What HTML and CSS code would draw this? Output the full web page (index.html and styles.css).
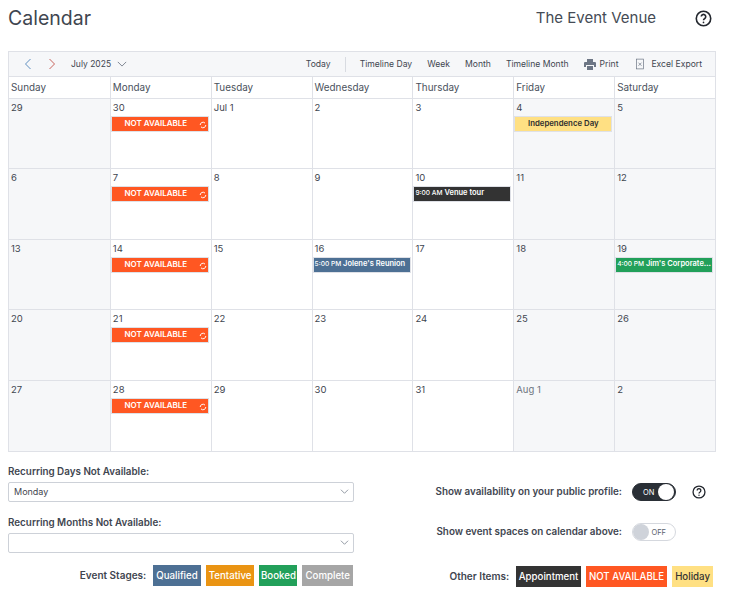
FILE: index.html
```html
<!DOCTYPE html>
<html lang="en">
<head>
<meta charset="utf-8">
<title>Calendar</title>
<link rel="stylesheet" href="styles.css">
</head>
<body>
<header class="top">
  <h1 class="title">Calendar</h1>
  <div class="venue">The Event Venue</div>
  <svg class="help help-top" viewBox="0 0 16 16"><circle cx="8" cy="8" r="6.8"/><path d="M5.900 6.200a2.100 2.100 0 1 1 3.300 1.800c-.8.500-1.200.900-1.200 1.700"/><circle class="dot" cx="8" cy="11.700" r=".8"/></svg>
</header>

<section class="cal">
  <div class="toolbar">
    <div class="nav">
      <svg class="chev" viewBox="0 0 8 12"><path class="blue" d="M6.500 1 1.500 6l5 5"/></svg>
      <svg class="chev" viewBox="0 0 8 12"><path class="red" d="M1.500 1l5 5-5 5"/></svg>
      <span class="month">July 2025</span>
      <svg class="down" viewBox="0 0 12 7"><path d="M1 1l5 5 5-5"/></svg>
    </div>
    <div class="views">
      <span>Today</span>
      <span class="sep"></span>
      <span>Timeline Day</span>
      <span class="v2">Week</span>
      <span class="v2">Month</span>
      <span class="v2">Timeline Month</span>
      <svg class="ico-print" viewBox="0 0 12 11"><path d="M3 0h6v3H3zM1.200 3h9.600c.7 0 1.200.5 1.200 1.200V8h-2V6H2v2H0V4.200C0 3.500.5 3 1.200 3zM3 7h6v4H3z"/></svg>
      <span>Print</span>
      <svg class="ico-xl" viewBox="0 0 9 12"><rect x=".5" y=".5" width="8" height="11"/><path d="M2.800 4.500l3.400 3.500M6.200 4.500 2.800 8"/></svg>
      <span>Excel Export</span>
    </div>
  </div>
  <div class="grid heads">
    <div>Sunday</div><div>Monday</div><div>Tuesday</div><div>Wednesday</div><div>Thursday</div><div>Friday</div><div>Saturday</div>
  </div>
  <div class="grid week">
    <div class="day off"><span>29</span></div>
    <div class="day"><span>30</span><div class="ev na">NOT AVAILABLE<svg class="rec" viewBox="0 0 10 10"><path d="M1.500 5a3.500 3.500 0 0 1 6-2.400M8.500 5a3.500 3.500 0 0 1-6 2.400"/></svg></div></div>
    <div class="day"><span>Jul 1</span></div>
    <div class="day"><span>2</span></div>
    <div class="day"><span>3</span></div>
    <div class="day off"><span>4</span><div class="ev hol">Independence Day</div></div>
    <div class="day off"><span>5</span></div>
  </div>
  <div class="grid week">
    <div class="day off"><span>6</span></div>
    <div class="day"><span>7</span><div class="ev na">NOT AVAILABLE<svg class="rec" viewBox="0 0 10 10"><path d="M1.500 5a3.500 3.500 0 0 1 6-2.400M8.500 5a3.500 3.500 0 0 1-6 2.400"/></svg></div></div>
    <div class="day"><span>8</span></div>
    <div class="day"><span>9</span></div>
    <div class="day"><span>10</span><div class="ev appt"><small>9:00 AM</small> Venue tour</div></div>
    <div class="day off"><span>11</span></div>
    <div class="day off"><span>12</span></div>
  </div>
  <div class="grid week">
    <div class="day off"><span>13</span></div>
    <div class="day"><span>14</span><div class="ev na">NOT AVAILABLE<svg class="rec" viewBox="0 0 10 10"><path d="M1.500 5a3.500 3.500 0 0 1 6-2.400M8.500 5a3.500 3.500 0 0 1-6 2.400"/></svg></div></div>
    <div class="day"><span>15</span></div>
    <div class="day"><span>16</span><div class="ev qual"><small>5:00 PM</small> Jolene's Reunion</div></div>
    <div class="day"><span>17</span></div>
    <div class="day off"><span>18</span></div>
    <div class="day off"><span>19</span><div class="ev booked"><small>4:00 PM</small> Jim's Corporate…</div></div>
  </div>
  <div class="grid week">
    <div class="day off"><span>20</span></div>
    <div class="day"><span>21</span><div class="ev na">NOT AVAILABLE<svg class="rec" viewBox="0 0 10 10"><path d="M1.500 5a3.500 3.500 0 0 1 6-2.400M8.500 5a3.500 3.500 0 0 1-6 2.400"/></svg></div></div>
    <div class="day"><span>22</span></div>
    <div class="day"><span>23</span></div>
    <div class="day"><span>24</span></div>
    <div class="day off"><span>25</span></div>
    <div class="day off"><span>26</span></div>
  </div>
  <div class="grid week">
    <div class="day off"><span>27</span></div>
    <div class="day"><span>28</span><div class="ev na">NOT AVAILABLE<svg class="rec" viewBox="0 0 10 10"><path d="M1.500 5a3.500 3.500 0 0 1 6-2.400M8.500 5a3.500 3.500 0 0 1-6 2.400"/></svg></div></div>
    <div class="day"><span>29</span></div>
    <div class="day"><span>30</span></div>
    <div class="day"><span>31</span></div>
    <div class="day off next"><span>Aug 1</span></div>
    <div class="day off"><span>2</span></div>
  </div>
</section>

<section class="bottom">
  <div class="left">
    <label class="lbl">Recurring Days Not Available:</label>
    <div class="select">Monday<svg class="sel-chev" viewBox="0 0 12 7"><path d="M1 1l5 5 5-5"/></svg></div>
    <label class="lbl lbl2">Recurring Months Not Available:</label>
    <div class="select"><svg class="sel-chev" viewBox="0 0 12 7"><path d="M1 1l5 5 5-5"/></svg></div>
    <div class="legend legend-l">
      <span class="legend-t">Event Stages:</span>
      <span class="tag t-q">Qualified</span>
      <span class="tag t-t">Tentative</span>
      <span class="tag t-b">Booked</span>
      <span class="tag t-c">Complete</span>
    </div>
  </div>
  <div class="right">
    <div class="opt">
      <span class="lbl">Show availability on your public profile:</span>
      <div class="switch on"><span>ON</span><i></i></div>
      <svg class="help help-opt" viewBox="0 0 16 16"><circle cx="8" cy="8" r="6.800"/><path d="M5.900 6.200a2.100 2.100 0 1 1 3.300 1.800c-.8.500-1.200.900-1.200 1.700"/><circle class="dot" cx="8" cy="11.700" r=".8"/></svg>
    </div>
    <div class="opt opt2">
      <span class="lbl">Show event spaces on calendar above:</span>
      <div class="switch"><i></i><span>OFF</span></div>
      <span class="help-gap"></span>
    </div>
    <div class="legend legend-r">
      <span class="legend-t">Other Items:</span>
      <span class="tag t-a">Appointment</span>
      <span class="tag t-n">NOT AVAILABLE</span>
      <span class="tag t-h">Holiday</span>
    </div>
  </div>
</section>
</body>
</html>
```
FILE: styles.css
```css
* { box-sizing: border-box; }
html, body { margin: 0; padding: 0; }
body {
  width: 733px;
  height: 597px;
  overflow: hidden;
  background: #fff;
  font-family: "Inter", "Liberation Sans", sans-serif;
  color: #3d4450;
  padding: 0 17px 0 8px;
}
.top { display: flex; align-items: center; height: 51px; padding-bottom: 14px; }
.title { margin: 0; font-size: 19.500px; font-weight: 400; color: #3f4650; flex: 1; line-height: 37px; }
.venue { font-size: 15px; color: #454b55; margin-right: 39px; margin-top: -2px; }
.help { fill: none; stroke: #23272e; stroke-width: 1.500; display: block; }
.help .dot { fill: #23272e; stroke: none; }
.help-top { width: 17px; height: 17px; margin-right: 4px; }

.cal { width: 708px; border: 1px solid #dfe1e7; }
.toolbar {
  display: flex; justify-content: space-between; align-items: center;
  height: 25px; background: #f6f7f9; border-bottom: 1px solid #dfe1e7;
  font-size: 8.600px; color: #3f4650; padding: 0 13px 0 15px;
}
.nav, .views { display: flex; align-items: center; }
.chev { width: 8px; height: 12px; fill: none; stroke-width: 1; margin-right: 16px; }
.chev .blue { stroke: #5f8fc0; }
.chev .red { stroke: #c8645c; }
.month { margin-left: -1px; font-size: 8.500px; }
.down { width: 10px; height: 6px; margin-left: 6px; fill: none; stroke: #6a7280; stroke-width: 1; }
.sep { width: 1px; height: 15px; background: #d8dbe1; margin: 0 14px; }
.v2 { margin-left: 15px; }
.ico-print { width: 12px; height: 11px; margin-left: 15px; margin-right: 4px; fill: #6d7685; }
.ico-xl { width: 8px; height: 12px; margin-left: 18px; margin-right: 7px; fill: none; stroke: #6d7685; stroke-width: .8; }

.grid { display: grid; grid-template-columns: repeat(7, minmax(0, 1fr)); }
.heads { height: 22px; border-bottom: 1px solid #dfe1e7; font-size: 9.900px; color: #4a515c; line-height: 21px; }
.heads > div { padding-left: 2px; border-left: 1px solid #dfe1e7; }
.heads > div:first-child { border-left: 0; }
.week { height: 70.400px; border-bottom: 1px solid #dfe1e7; }
.week:last-child { border-bottom: 0; }
.day { border-left: 1px solid #dfe1e7; padding: 2px 1px 0 0; font-size: 9.500px; color: #3f4650; line-height: 14px; }
.day:first-child { border-left: 0; }
.day > span { display: block; padding-left: 2px; }
.next > span { color: #6d7480; }
.off { background: #f6f7f9; }
.ev {
  position: relative; height: 16px; margin-top: 1px; width: 98px;
  border: 1px solid #dfe1e7; line-height: 12px; font-size: 7.500px; font-weight: 600;
  color: #fff; white-space: nowrap; overflow: hidden;
}
.ev small { font-size: 6.600px; font-weight: 500; padding-left: 1px; }
.na { background: #ff5722; text-align: center; padding-right: 8px; font-size: 8px; }
.hol { background: #ffe083; color: #2e2e2e; text-align: center; font-size: 7.800px; }
.appt { background: #333; }
.qual { background: #4d7094; }
.booked { background: #22a05a; }
.rec { position: absolute; right: 1px; top: 4px; width: 8px; height: 8px; fill: none; stroke: #fff; stroke-width: 1.200; }

.bottom { display: flex; width: 708px; padding-top: 13px; }
.left { width: 346px; flex: none; }
.lbl { font-size: 9.850px; font-weight: 600; color: #3f4650; line-height: 13px; display: block; }
.select {
  position: relative; height: 20px; margin-top: 4px; padding-left: 5px;
  border: 1px solid #cdd1d8; border-radius: 2px; font-size: 9px; line-height: 17px; color: #3f4650;
}
.lbl2 { margin-top: 14px; }
.sel-chev { position: absolute; right: 4px; top: 6px; width: 9px; height: 5px; fill: none; stroke: #6a7280; stroke-width: 1; }
.legend { display: flex; align-items: center; justify-content: flex-end; margin-top: 12px; height: 21px; gap: 5px; }
.legend-t { font-size: 10px; font-weight: 600; color: #3f4650; margin-right: 2px; }
.legend-l { padding-right: 1px; }
.tag { height: 21px; line-height: 21px; padding: 0 3px; font-size: 9.700px; font-weight: 500; color: #fff; white-space: nowrap; }
.t-q { background: #4d7094; }
.t-t { background: #ea9413; }
.t-b { background: #22a05a; padding: 0 1.500px; }
.t-c { background: #a6a6a6; }
.t-a { background: #333; padding: 0 2.500px; }
.t-n { background: #ff5722; }
.t-h { background: #ffe083; color: #333; }

.right { flex: 1; display: flex; flex-direction: column; align-items: stretch; padding-top: 18px; }
.opt { display: flex; align-items: center; justify-content: flex-end; height: 19px; }
.opt .lbl { margin-bottom: 2px; }
.opt2 { margin-top: 21px; }
.switch {
  display: flex; align-items: center; justify-content: space-between;
  width: 44px; height: 18px; margin-left: 10px; padding: 2px; border-radius: 9px;
  border: 1px solid #d5d8de; background: #fff; font-size: 7.500px; color: #5a616c;
}
.switch i { display: block; width: 16px; height: 16px; border-radius: 50%; background: #cfd3da; margin: -1px 0 -1px -2px; }
.switch span { padding-right: 7px; }
.switch.on { background: #2a2f36; border-color: #2a2f36; color: #fff; }
.switch.on i { background: #fff; margin: -1px -1px -1px 0; }
.switch.on span { padding: 0 0 0 8px; }
.help-opt { width: 14px; height: 14px; margin-left: 16px; margin-right: 10px; }
.help-gap { width: 14px; margin-left: 16px; margin-right: 10px; }
.legend-r { margin-top: 24px; padding-right: 3px; }
```
